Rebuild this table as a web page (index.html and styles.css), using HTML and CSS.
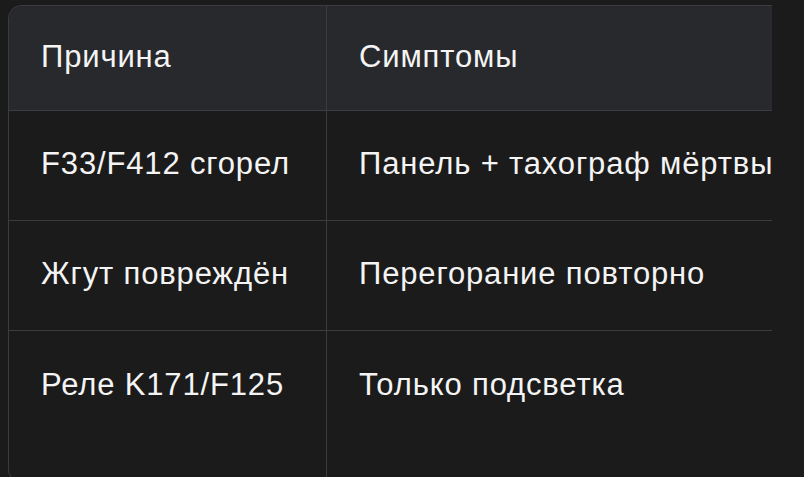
FILE: index.html
```html
<!DOCTYPE html>
<html lang="ru">
<head>
<meta charset="utf-8">
<title>Таблица</title>
<link rel="stylesheet" href="styles.css">
</head>
<body>
<div class="wrap">
  <div class="grid">
    <div class="cell head first">Причина</div>
    <div class="cell head">Симптомы</div>
    <div class="cell first">F33/F412 сгорел</div>
    <div class="cell">Панель + тахограф мёртвы</div>
    <div class="cell first">Жгут повреждён</div>
    <div class="cell">Перегорание повторно</div>
    <div class="cell first last">Реле K171/F125</div>
    <div class="cell last">Только подсветка</div>
    <div class="cell first fill"></div>
    <div class="cell fill"></div>
  </div>
</div>
</body>
</html>
```

FILE: styles.css
```css
html, body {
  margin: 0;
  padding: 0;
  background: #1b1b1b;
}
body {
  padding: 5px 0 0 8px;
  font-family: "Liberation Sans", Arial, sans-serif;
  color: #f4f4f4;
  overflow: hidden;
}
.wrap {
  box-sizing: border-box;
  width: 764px;
  height: 478px;
  border: 1px solid #3b3c3f;
  border-right: none;
  border-radius: 14px 0 0 14px;
  overflow: hidden;
  background: #1b1b1b;
}
.grid {
  display: grid;
  grid-template-columns: 318px 700px;
  grid-template-rows: 105px 110px 110px 110px 1fr;
  height: 100%;
}
.cell {
  box-sizing: border-box;
  display: flex;
  align-items: center;
  padding: 0 32px 3px;
  font-size: 31px;
  letter-spacing: 0.85px;
  white-space: nowrap;
  border-bottom: 1px solid #3b3c3f;
}
.head {
  background: #28292c;
}
.first {
  border-right: 1px solid #3b3c3f;
}
.last, .fill {
  border-bottom: none;
}
```
